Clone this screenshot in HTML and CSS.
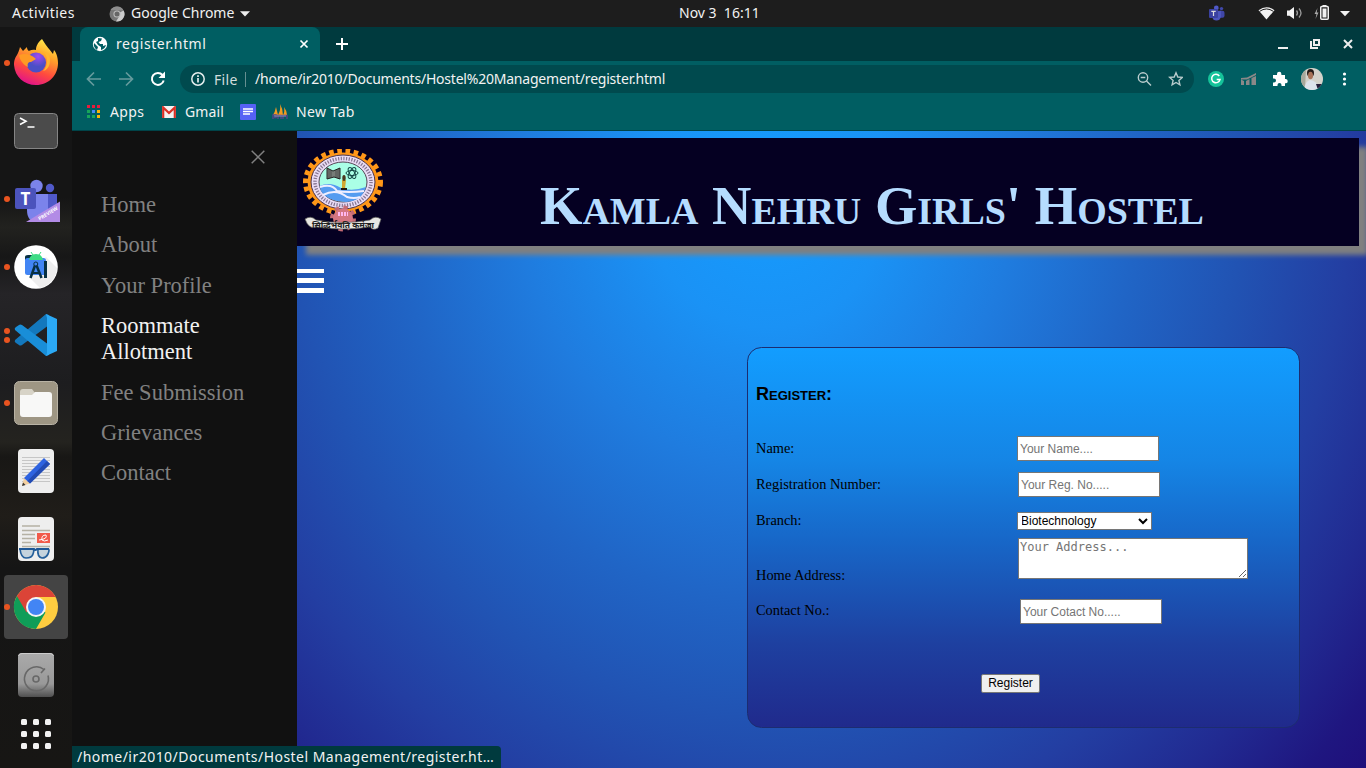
FILE: index.html
```html
<!DOCTYPE html>
<html lang="en">
<head>
<meta charset="utf-8">
<title>register.html</title>
<link rel="stylesheet" href="styles.css">
</head>
<body>
<div class="desktop">
  <header class="topbar">
    <span class="activities">Activities</span>
    <span class="appmenu">
      <svg width="16" height="16" viewBox="0 0 16 16"><circle cx="8" cy="8" r="7.5" fill="#777"/><path d="M8 8L14.6 4.5A7.5 7.5 0 0 1 7 15.5L11 9Z" fill="#ccc"/><path d="M1.5 4A7.5 7.5 0 0 1 14.6 4.5L8 4Z" fill="#8d8d8d"/><circle cx="8" cy="8" r="3.6" fill="#bbb"/><circle cx="8" cy="8" r="2.5" fill="#666"/></svg>
      <span class="appname">Google Chrome</span>
      <svg width="10" height="6" viewBox="0 0 10 6"><path d="M0 .3H10L5 5.5Z" fill="#eee"/></svg>
    </span>
    <span class="clock">Nov 3&nbsp; 16:11</span>
    <svg class="tray" width="146" height="27" viewBox="0 0 146 27">
      <g><circle cx="7.3" cy="8" r="2.400" fill="#5059c9"/><circle cx="12.500" cy="8.600" r="1.700" fill="#4048aa"/><rect x="9.500" y="10.700" width="6" height="7" rx="2" fill="#3f46a8"/><path d="M3 10.700H12V16A4.500 4.500 0 0 1 3 16Z" fill="#4c55bd"/><rect x="0" y="9" width="9" height="9" rx="1" fill="#3a41a0"/><path d="M2.300 11.300H6.700M4.500 11.300V16" stroke="#ddd" stroke-width="1.200"/></g>
      <path d="M49.500 10.200Q57.500 4.300 65.500 10.200L57.500 19.500Z" fill="#f2f2f2"/><path d="M50.500 11.400Q57.500 6.500 64.500 11.400" fill="none" stroke="#1d1d1d"/>
      <g transform="translate(9 0)">
      <g fill="none" stroke="#999" stroke-width="1.300"><path d="M78.500 10.500Q80.500 13 78.500 15.500M81 8.500Q85 13 81 17.500"/><path d="M69 10.500H71.500L76 7V19L71.500 15.700H69Z" fill="#f2f2f2" stroke="none"/></g>
      <rect x="102.750" y="6.500" width="7.500" height="12.700" rx="1" fill="none" stroke="#f2f2f2" stroke-width="1.500"/><rect x="104.500" y="8.500" width="4" height="9" fill="#f2f2f2"/><rect x="104.500" y="5" width="4" height="2" fill="#f2f2f2"/>
      <path d="M99.500 8L96.500 14H98.500L97.500 19L100.500 12.500H98.700Z" fill="#aaa"/>
      <path d="M122 11H132L127 16.300Z" fill="#f2f2f2"/></g>
    </svg>
  </header>

  <div class="workspace">
    <nav class="dock">
      <div class="app"><i class="dots"><b></b></i>
        <svg width="48" height="48" viewBox="0 0 48 48"><defs><linearGradient id="ff" x1=".8" y1="0" x2=".4" y2="1"><stop offset="0" stop-color="#fff44f"/><stop offset=".35" stop-color="#ffa52a"/><stop offset=".7" stop-color="#ff4a3e"/><stop offset="1" stop-color="#e31587"/></linearGradient><radialGradient id="fg" cx=".6" cy=".2"><stop offset="0" stop-color="#a44af0"/><stop offset="1" stop-color="#4b4fc6"/></radialGradient></defs><path d="M30 0C25 4 24 8 24 11C19 10 17 12 17 12C15 11 15 8 15 8L11 12L8 8C7 12 6 14 5 16C2 20 2 24 2 26C3 38 12 46 24 46C37 46 46 36 46 24C46 18 44 13 42 11L41 15C38 11 35 8 30 0Z" fill="url(#ff)"/><circle cx="24" cy="23.500" r="10" fill="url(#fg)"/><path d="M7 16C13 14 19 15 24 20L19 23C16 23 15 25 16 28C12 26 8 22 7 16Z" fill="#ff9a24"/><path d="M31 12C37 18 36 27 31 32C38 31 40 20 36 14Z" fill="#ffb52e"/></svg></div>
      <div class="app">
        <svg width="48" height="48" viewBox="0 0 48 48"><rect x="2.500" y="6.500" width="43" height="35" rx="4" fill="#4b4b4b" stroke="#858585"/><path d="M8 11L14 14.300L8 17.500M15.500 20H22.500" fill="none" stroke="#fff" stroke-width="1.600"/></svg></div>
      <div class="app"><i class="dots"><b></b></i>
        <svg class="teams" width="48" height="48" viewBox="0 0 48 48"><circle cx="38" cy="10" r="4.200" fill="#5059c9"/><circle cx="24.500" cy="8" r="6.200" fill="#7b83eb"/><path d="M34 16H45V30Q45 38 34 38Z" fill="#5059c9"/><path d="M15 16H36V33Q35 44 25 44Q15 44 15 32Z" fill="#7b83eb"/><rect x="3" y="10" width="21" height="21" rx="2" fill="#4b53bc"/><path d="M14 44L48 23.500V44Z" fill="#b28be6"/><text x="13.500" y="26.500" text-anchor="middle" class="teams-t">T</text><text class="preview" transform="translate(27.500 42.500) rotate(-31)">PREVIEW</text></svg></div>
      <div class="app"><i class="dots"><b></b></i>
        <svg width="48" height="48" viewBox="0 0 48 48"><circle cx="24" cy="24" r="21.800" fill="#fff"/><path d="M34 14L45 25A22 22 0 0 1 28 45L17 34Z" fill="#eee"/><path d="M13 17V14Q13 12 16 12H20V17Z" fill="#073042"/><rect x="13" y="15" width="21" height="17" rx="2.500" fill="#4285f4"/><path d="M17 17Q18 11 24 11Q30 11 31 17Z" fill="#3ddc84"/><path d="M19 9L21 12M29 9L27 12" stroke="#3ddc84"/><path d="M23.500 21L18.500 35M24 21L29.500 35" stroke="#073042" stroke-width="2.500"/><path d="M20 30H28" stroke="#073042" stroke-width="2"/><path d="M33.500 18V35" stroke="#073042" stroke-width="3"/><circle cx="23.800" cy="21" r="2" fill="#4285f4" stroke="#073042"/></svg></div>
      <div class="app"><i class="dots"><b></b><b></b></i>
        <svg width="48" height="48" viewBox="0 0 48 48"><path d="M3 29Q2 31 4 32L7 34Q8 35 10 34L37 14V4L34 3Z" fill="#1378bd"/><path d="M3 19Q2 17 4 16L7 14Q8 13 10 14L37 34V44L34 45Z" fill="#198ed8"/><path d="M34 3L45 8V40L34 45L35 42V7Z" fill="#2ba9f5"/></svg></div>
      <div class="app"><i class="dots"><b></b></i>
        <svg width="48" height="48" viewBox="0 0 48 48"><rect x="2.500" y="2.500" width="43" height="43" rx="5" fill="#9e9684" stroke="#b9b3a5"/><path d="M8 16V13Q8 10 11 10H20L23 14V17H8Z" fill="#d7d3c7"/><path d="M8 16H20L23 13H37Q40 13 40 16V35Q40 38 37 38H11Q8 38 8 35Z" fill="#f8f8f7"/></svg></div>
      <div class="app">
        <svg width="48" height="48" viewBox="0 0 48 48"><rect x="6" y="2" width="36" height="44" rx="4" fill="#eee"/><path d="M10 10.500H38M10 13.500H38M10 16.500H38M10 19.500H38M10 22.500H38M10 25.500H38M10 28.500H38M10 31.500H38M10 34.500H38" stroke="#c6c6c6"/><path d="M10 39L12 31L18 36.500Z" fill="#f2cfa0"/><path d="M10 39L11 35.500L13.500 38Z" fill="#333"/><path d="M12 31L32 11L38 17L18 36.500Z" fill="#2e63e0"/><path d="M15.500 34L35 14L38 17L18 36.500Z" fill="#234bb2"/></svg></div>
      <div class="app">
        <svg width="48" height="48" viewBox="0 0 48 48"><rect x="6" y="2" width="36" height="44" rx="4" fill="#eee"/><path d="M10 11H28M10 15.500H38M10 19.500H23M10 23.500H23M10 27.500H19M10 31.500H38" stroke="#b5b1a4" stroke-width="1.700"/><rect x="25" y="18" width="13" height="10" fill="#f15a4a"/><path d="M27 25Q36 24 34 20Q29 20 30 25Q32 27 36 25" fill="none" stroke="#fff"/><path d="M8 34H20Q23 34 21 39Q20 43 14 43Q9 43 8 34ZM26 34H36Q38 34 36 39Q34 43 30 43Q25 42 26 34Z" fill="#c5d3dd" stroke="#245f9b" stroke-width="1.700"/><path d="M7 34H22Q23 36 25 34H37" fill="none" stroke="#1f5796" stroke-width="2"/></svg></div>
      <div class="app active"><i class="dots"><b></b></i>
        <svg width="48" height="48" viewBox="0 0 48 48"><circle cx="24" cy="24" r="22" fill="#ffcd40"/><path d="M24 24L4.900 13A22 22 0 0 0 24 46L33.500 29.500Z" fill="#0f9d58"/><path d="M4.900 13A22 22 0 0 1 43.600 14H24L14.500 29.500Z" fill="#db4437"/><circle cx="24" cy="24" r="10" fill="#f5f5f5"/><circle cx="24" cy="24" r="8" fill="#4285f4"/></svg></div>
      <div class="app">
        <svg width="48" height="48" viewBox="0 0 48 48"><defs><linearGradient id="dk" x2="0" y2="1"><stop offset="0" stop-color="#aaa"/><stop offset=".7" stop-color="#999"/><stop offset="1" stop-color="#505050"/></linearGradient></defs><rect x="6" y="2" width="36" height="44" rx="4" fill="url(#dk)"/><path d="M6.500 5Q7 2.500 10 2.500H38Q41 2.500 41.500 5" fill="none" stroke="#ccc"/><path d="M32 18.500A12 12 0 1 0 36 24.500M29 22L33 17.500" fill="none" stroke="#686868" stroke-width="1.600"/><circle cx="24" cy="28" r="3" fill="none" stroke="#686868" stroke-width="1.600"/></svg></div>
      <div class="grid-button"><b></b><b></b><b></b><b></b><b></b><b></b><b></b><b></b><b></b></div>
    </nav>

    <main class="browser">
      <div class="tabstrip">
        <div class="tab">
          <svg width="16" height="16" viewBox="0 0 16 16"><circle cx="8" cy="8" r="7.200" fill="#fff"/><path d="M2 7L6 11L5 14Q1 11 2 7ZM6 2L10 2.500L9 5L6.500 6L8 8H11V10L14 9Q13 13 9 14L9 11L6 9L4 6L6 5Z" fill="#005e62"/></svg>
          <span class="tabtitle">register.html</span>
          <svg width="10" height="10" viewBox="0 0 10 10"><path d="M1.500 1.500L8.500 8.500M8.500 1.500L1.500 8.500" stroke="#fff" stroke-width="1.700"/></svg>
        </div>
        <svg class="plus" width="12" height="12" viewBox="0 0 12 12"><path d="M6 0V12M0 6H12" stroke="#fff" stroke-width="2"/></svg>
        <svg class="wincontrols" width="76" height="14" viewBox="0 0 76 14"><path d="M0 11H10" stroke="#eee" stroke-width="2"/><path d="M33 4V11H40" fill="none" stroke="#eee" stroke-width="2"/><rect x="36" y="3" width="5" height="5" fill="none" stroke="#eee" stroke-width="2"/><path d="M66 3L74 11M74 3L66 11" stroke="#eee" stroke-width="2"/></svg>
      </div>
      <div class="toolbar">
        <svg class="navicons" width="84" height="20" viewBox="0 0 84 20"><g fill="none" stroke="#659b9d" stroke-width="1.700"><path d="M17 10H4M10 3.500L3.500 10L10 16.500M35 10H48M42 3.500L48.500 10L42 16.500"/></g><path d="M78.500 6A6 6 0 1 0 79.700 11.500" fill="none" stroke="#fff" stroke-width="2"/><path d="M74.500 9H81V2.500Z" fill="#fff"/></svg>
        <div class="omnibox">
          <svg width="14" height="14" viewBox="0 0 14 14"><circle cx="7" cy="7" r="6.200" fill="none" stroke="#e5eeee" stroke-width="1.500"/><path d="M7 6V10.500M7 3.300V4.900" stroke="#e5eeee" stroke-width="1.700"/></svg>
          <span class="file">File</span>
          <span class="url">/home/ir2010/Documents/Hostel%20Management/register.html</span>
          <svg class="omni-icons" width="46" height="16" viewBox="0 0 46 16"><g fill="none" stroke="#b9cccd" stroke-width="1.400"><circle cx="6" cy="6.500" r="4.700"/><path d="M9.500 10L14 14.500M3.700 6.500H8.300"/><path d="M39 1.800L40.800 6L45.300 6.400L41.900 9.400L42.900 13.800L39 11.500L35.100 13.800L36.100 9.400L32.700 6.400L37.200 6Z"/></g></svg>
        </div>
        <svg class="extensions" width="146" height="24" viewBox="0 0 146 24"><circle cx="9" cy="12" r="8" fill="#15c39a"/><path d="M12.300 9A4.200 4.200 0 1 0 13 12.500H9.700" fill="none" stroke="#fff" stroke-width="1.500"/><path d="M34 18V12.500L37 14V18ZM39 18V14L42.500 12V18ZM44.500 18V11L49 9V18ZM34 11L40 10.500L49 6V8L40 12.500L34 12.500Z" fill="#8b8888"/><path d="M66 8H70V7A2.200 2.200 0 0 1 74.400 7V8H78V12H79A2.200 2.200 0 0 1 79 16.300H78V19H74.500V18A2 2 0 0 0 70.500 18V19H66V15.500H67A2 2 0 0 0 67 11.500H66Z" fill="#fff"/><clipPath id="av"><circle cx="105" cy="12" r="11"/></clipPath><g clip-path="url(#av)"><rect x="94" y="1" width="22" height="22" fill="#d4d3cb"/><path d="M94 1H99L98 23H94Z" fill="#a7a99c"/><path d="M97 24Q98 14 103 13Q110 13 113 24Z" fill="#dce3ec"/><ellipse cx="103.500" cy="6" rx="3.500" ry="4" fill="#241b18"/><ellipse cx="103.500" cy="8.500" rx="2.500" ry="3.800" fill="#a87358"/><path d="M109 17H116V23H111Z" fill="#26203c"/></g><g fill="#fff"><circle cx="137.500" cy="7" r="1.600"/><circle cx="137.500" cy="12" r="1.600"/><circle cx="137.500" cy="17" r="1.600"/></g></svg>
      </div>
      <div class="bookmarks">
        <svg width="14" height="14" viewBox="0 0 14 14"><path d="M0 1.500H3M5 1.500H8M10 1.500H13" stroke="#ea1b3b" stroke-width="3"/><path d="M0 6.500H3M0 11.500H3M5 11.500H8" stroke="#18a55a" stroke-width="3"/><path d="M5 6.500H8" stroke="#458af4" stroke-width="3"/><path d="M10 6.500H13M10 11.500H13" stroke="#f9b408" stroke-width="3"/></svg>
        <span class="bm-apps">Apps</span>
        <svg width="14" height="12" viewBox="0 0 14 12"><rect width="14" height="12" rx="1" fill="#f2f2f2"/><path d="M1.200 12V1.500L7 7L12.800 1.500V12" fill="none" stroke="#d93025" stroke-width="2.200"/></svg>
        <span class="bm-gmail">Gmail</span>
        <svg width="16" height="16" viewBox="0 0 16 16"><rect width="16" height="16" rx="1" fill="#5561f5"/><path d="M3 5H13M3 7.500H13M3 10H10" stroke="#fff" stroke-width="1.300"/></svg>
        <svg class="sail" width="16" height="16" viewBox="0 0 16 16"><path d="M1 11Q3 8 4 3L6 11ZM6 11Q9 6 8 0Q11 5 11 11ZM11 11Q13 8 12 3Q15 7 15 11Z" fill="#f39b20"/><path d="M1 15V11H4V13.500H2M6 15V11.500H9V15M11 15V11.500H15V15" fill="none" stroke="#514586" stroke-width="1.500"/><path d="M2 12H14" stroke="#c8c4dd" stroke-width=".6"/></svg>
        <span class="bm-new">New Tab</span>
      </div>

      <section class="page">
        <aside class="sidenav">
          <div class="close"><svg width="14" height="14" viewBox="0 0 14 14"><path d="M.7.7L13.300 13.300M13.300.7L.7 13.300" stroke="#818181" stroke-width="1.500"/></svg></div>
          <a>Home</a><a>About</a><a>Your Profile</a><a class="hover">Roommate Allotment</a><a>Fee Submission</a><a>Grievances</a><a>Contact</a>
        </aside>
        <div class="content">
          <div class="banner">
            <svg class="logo" width="82" height="84" viewBox="0 0 82 84">
              <ellipse cx="41" cy="33" rx="37.500" ry="31" fill="none" stroke="#ff9718" stroke-width="5" stroke-dasharray="4.600 3.600"/>
              <ellipse cx="41" cy="33" rx="35.500" ry="29.500" fill="#ff9718"/>
              <ellipse cx="41" cy="33" rx="32" ry="27" fill="#e9dcf5" stroke="#4a3550"/>
              <ellipse cx="41" cy="33" rx="28" ry="23.500" fill="none" stroke="#857490" stroke-width="3.500" stroke-dasharray="1.200 1.500"/>
              <ellipse cx="41" cy="33" rx="24" ry="20" fill="#aaffe6" stroke="#554455"/>
              <path d="M17.500 37Q28 32 39 39Q50 43 64 38Q60 52 44 53Q25 52 19 42Z" fill="#559cf0"/>
              <path d="M18 38Q30 34 35 42Q46 44 62 42M21 46Q34 39 45 48Q52 50 58 48" fill="none" stroke="#eef" stroke-width="2"/>
              <path d="M25 19L31 22L38 19V30L32 28L25 30Z" fill="#777d78" stroke="#222"/><path d="M27 20V29M29 21V29M34 21V29M36 20V29" stroke="#333" stroke-width=".6"/>
              <g fill="none" stroke="#164a48"><ellipse cx="50" cy="24" rx="6" ry="2.500"/><ellipse cx="50" cy="24" rx="6" ry="2.500" transform="rotate(60 50 24)"/><ellipse cx="50" cy="24" rx="6" ry="2.500" transform="rotate(120 50 24)"/></g>
              <path d="M40 31H44L43 40H40Z" fill="#d1a932"/><path d="M39 40H45" stroke="#201a11" stroke-width="2"/><ellipse cx="42" cy="29" rx="1.700" ry="3" fill="#4b371f"/>
              <circle cx="41" cy="69.500" r="11" fill="none" stroke="#c46b74" stroke-width="4" stroke-dasharray="4.300 4.340"/><circle cx="41" cy="69.500" r="10" fill="#d57682"/><path d="M36 65H46" stroke="#ffb8ef" stroke-width="4" stroke-dasharray="2 1"/>
              <path d="M3 70Q9 66 14 71Q41 76 68 71Q73 66 79 70L76 79Q71 82 68 78Q41 82 14 78Q7 81 3 70Z" fill="#e7e7e3" stroke="#61615d" stroke-width=".7"/>
              <text x="41" y="78.500" text-anchor="middle" class="motto">सिद्धिर्भवति कर्मजा</text>
            </svg>
            <h1>Kamla Nehru Girls' Hostel</h1>
          </div>
          <div class="burger"><b></b><b></b><b></b></div>
          <form class="card">
            <h2>Register:</h2>
            <div class="row"><label>Name:</label><input type="text" placeholder="Your Name...."></div>
            <div class="row"><label>Registration Number:</label><input class="reg" type="text" placeholder="Your Reg. No....."></div>
            <div class="row branch"><label>Branch:</label><select><option>Biotechnology</option></select></div>
            <div class="row address"><label>Home Address:</label><textarea placeholder="Your Address..."></textarea></div>
            <div class="row last"><label>Contact No.:</label><input class="contact" type="text" placeholder="Your Cotact No....."></div>
            <button type="button">Register</button>
          </form>
        </div>
        <div class="status">/home/ir2010/Documents/Hostel Management/register.ht…</div>
      </section>
    </main>
  </div>
</div>
</body>
</html>
```
FILE: styles.css
```css
* { box-sizing: border-box; }
body { margin: 0; overflow: hidden; font-family: "Noto Sans", "Open Sans", sans-serif; font-size: 14px; color: #f2f2f2; }
svg { display: block; flex: none; }
.desktop { width: 1366px; height: 768px; display: flex; flex-direction: column; }
.topbar { height: 27px; flex: none; background: #1d1d1d; display: grid; grid-template-columns: 109px 570px 530px 157px; align-items: center; white-space: nowrap; line-height: 18px; }
.activities { padding-left: 12px; letter-spacing: .45px; }
.activities, .appname, .clock { padding-bottom: 1px; }
.appmenu { display: flex; align-items: center; gap: 6px; }
.tray { overflow: visible; }
.workspace { flex: 1; display: flex; min-height: 0; }
.dock { width: 72px; flex: none; padding-top: 2px; background: linear-gradient(#151515 0, #151515 23%, #22221f 27%, #171717 31%, #252427 36%, #1d1d1f 48%, #24231f 56%, #181715 58%, #201d19 66%, #151515 73%, #171614 100%); }
.app { height: 68px; position: relative; display: flex; align-items: center; justify-content: center; }
.app.active::before { content: ""; position: absolute; inset: 2px 4px; border-radius: 4px; background: #444; }
.app svg { position: relative; }
.teams { margin-top: 5px; }
.dots { position: absolute; z-index: 1; left: 4px; top: 0; bottom: 0; display: flex; flex-direction: column; gap: 3px; justify-content: center; }
.dots b { width: 6px; height: 6px; border-radius: 50%; background: #e95420; }
.teams-t { font: bold 17px "Open Sans", sans-serif; fill: #fff; }
.preview { font: bold 5px "Open Sans", sans-serif; fill: #fff; }
.grid-button { display: grid; grid-template-columns: repeat(3, 6px); gap: 6px; width: 30px; margin: 10px auto 0; }
.grid-button b { height: 6px; border-radius: 1.5px; background: #f2f2f2; }
.browser { flex: 1; display: flex; flex-direction: column; min-width: 0; background: #005e62; }
.tabstrip { height: 34px; flex: none; display: flex; background: #003a3e; padding-left: 8px; align-items: center; }
.tab { width: 240px; height: 34px; background: #005e62; border-radius: 8px 8px 0 0; padding: 0 11px 0 12px; display: flex; align-items: center; gap: 8px; }
.tabtitle { flex: 1; letter-spacing: .57px; padding-bottom: 2px; }
.plus { margin-left: 16px; }
.wincontrols { margin-left: auto; margin-right: 12px; }
.toolbar { height: 36px; flex: none; display: flex; align-items: center; padding-left: 12px; }
.navicons { margin-right: 12px; }
.omnibox { width: 1014px; height: 28px; border-radius: 14px; background: #004a4e; display: flex; align-items: center; padding: 0 11px; }
.file { margin-left: 9px; width: 32px; border-right: 1px solid #668f91; line-height: 15px; color: #d2dddd; letter-spacing: .3px; }
.url { margin-left: 9px; white-space: nowrap; letter-spacing: -.214px; padding-bottom: 1px; }
.omni-icons { margin-left: auto; }
.extensions { margin-left: 13px; }
.bookmarks { height: 34px; flex: none; padding: 0 0 4px 15px; display: flex; align-items: center; border-bottom: 1px solid #004449; white-space: nowrap; letter-spacing: .4px; }
.bm-apps { margin: 0 17px 0 9px; width: 35px; }
.bm-gmail { margin: 0 15px 0 9px; width: 40px; letter-spacing: .1px; }
.sail { margin: 0 8px 0 16px; }
.page { flex: 1; display: flex; min-height: 0; position: relative; overflow: hidden; }
.sidenav { width: 225px; flex: none; background: #111; padding: 19px 28px 0 29px; font: 22.5px/26px "Liberation Serif", serif; color: #818181; }
.close { height: 42px; padding: 0 4px 0 0; display: flex; justify-content: flex-end; }
.sidenav a { display: block; padding: 0 0 14.400px; }
.sidenav .hover { color: #f1f1f1; }
.content { flex: 1; padding-top: 7px; overflow: hidden; background: radial-gradient(560px 620px at 470px 60px, #149cff 0, #1a92f5 22%, #1f7cdf 44%, #2065c6 66%, #2153b3 85%, #233ea2 104%, #212a91 120%, #1f1680 134%, #1e0070 158%); }
.banner { width: 1062px; height: 108px; background: #050022; box-shadow: 9px 9px 5px gray; position: relative; display: flex; align-items: center; justify-content: center; }
.logo { position: absolute; left: 5px; top: 11px; }
.motto { font: bold 8.5px "Noto Sans", sans-serif; fill: #222; }
h1 { margin: 28px 0 0 86px; width: 662px; white-space: nowrap; font: bold 54.500px/66px "Liberation Serif", serif; font-variant: small-caps; color: #b5dcff; }
.burger { display: grid; grid-template-rows: 4px 5px 5px; row-gap: 5px; width: 27px; margin-top: 23px; }
.burger b { background: #fff; }
.card { width: 553px; height: 381px; margin: 54px 0 0 450px; padding: 0 8px; border: 1px solid #1c2c70; border-radius: 14.400px; background: linear-gradient(#129dff, #1585e5 30%, #1768c9 50%, #1e40a0 78%, #202a8c); font: 14.400px/17px "Liberation Serif", serif; color: #000; }
h2 { margin: 0; height: 82px; padding-top: 35px; font: bold 18px/22px "Liberation Sans", sans-serif; font-variant: small-caps; }
.row { height: 36px; display: flex; align-items: center; }
.row label { width: 261px; flex: none; }
input, select, textarea, button { margin: 0; font: 12px "Liberation Sans", sans-serif; border: 1px solid #767676; border-radius: 0; }
input { width: 142px; height: 25px; padding: 2px 2px 1px; background: #fff; }
.reg { margin-left: 1px; }
.contact { margin-left: 3px; }
select { width: 135px; height: 18px; background: #fff; color: #000; }
.branch select { margin-top: 2px; text-indent: -1px; }
.address { height: 55px; align-items: flex-start; }
.address label { padding-top: 29px; }
.last label { padding-bottom: 2px; }
textarea { width: 230px; height: 41px; margin-left: 1px; padding: 1px; font: 12px "DejaVu Sans Mono", monospace; }
button { display: block; width: 59px; height: 19px; margin: 45px 0 0 225px; padding: 0 0 2px; background: #efefef; border-radius: 2px; color: #000; }
.status { position: absolute; left: 0; bottom: 0; width: 429px; height: 22px; padding-left: 5px; border-radius: 0 4px 0 0; background: #003a3e; line-height: 21px; white-space: nowrap; letter-spacing: .47px; }
```
